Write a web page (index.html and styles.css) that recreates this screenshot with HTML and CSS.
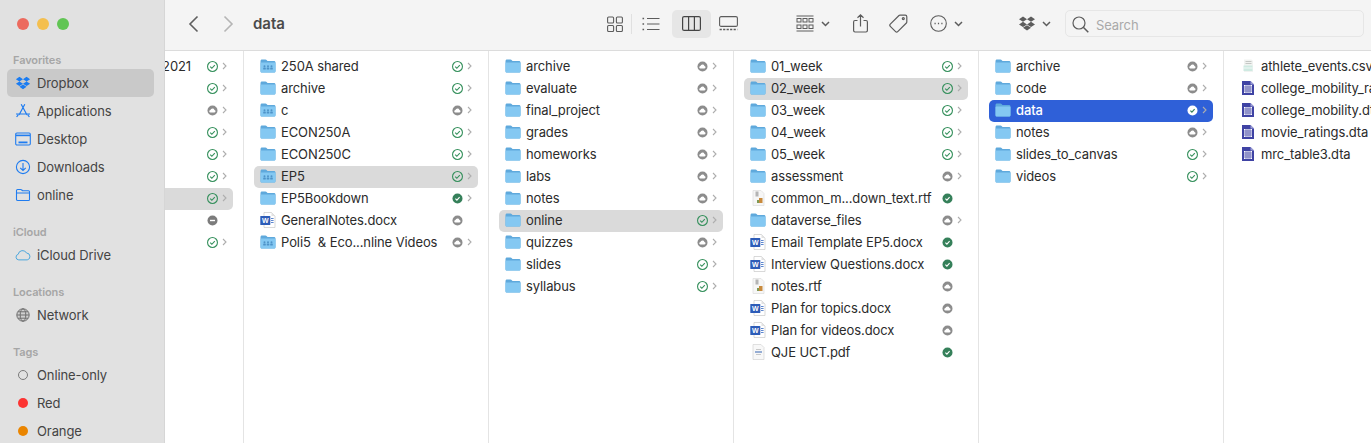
FILE: index.html
```html
<!DOCTYPE html>
<html>
<head>
  <title>data</title>
  <link rel="stylesheet" href="styles.css">
</head>
<body>
  <svg class="defs" width="0" height="0">
    <symbol id="folder" viewBox="0 0 16 14">
      <path d="M.5 2.2C.5 1.2 1.1.6 2 .6h3.4c.7 0 1 .2 1.4.6l.7.7h6.4c1 0 1.600.6 1.600 1.600V12c0 1-.6 1.500-1.600 1.500H2c-1 0-1.500-.5-1.500-1.500z" fill="#5fa9dc"/>
      <path d="M.5 4.400c0-.7.4-1 1-1h13c.6 0 1 .3 1 1V12c0 1-.6 1.500-1.600 1.500H2c-1 0-1.500-.5-1.500-1.500z" fill="#84c8f2"/>
    </symbol>
    <symbol id="shared" viewBox="0 0 16 14">
      <use href="#folder"/>
      <g fill="#4f93c8">
        <circle cx="4.500" cy="7.200" r="1"/><circle cx="8" cy="7.200" r="1"/><circle cx="11.500" cy="7.200" r="1"/>
        <rect x="3.200" y="8.600" width="2.600" height="2" rx=".6"/><rect x="6.700" y="8.600" width="2.600" height="2" rx=".6"/><rect x="10.200" y="8.600" width="2.600" height="2" rx=".6"/>
      </g>
    </symbol>
    <symbol id="word" viewBox="0 0 16 16">
      <path d="M4 .5h7.500L15 4v11.500H4z" fill="#fff" stroke="#c9c9c9" stroke-width=".7"/>
      <path d="M11.500.5V4H15z" fill="#e2e2e2"/>
      <path d="M11 6.500h2.600M11 8.500h2.600M11 10.500h2.600" stroke="#4a78c8" stroke-width=".9"/>
      <rect x=".3" y="4" width="10" height="9" rx=".6" fill="#2d5cb8"/>
    </symbol>
    <symbol id="rtf" viewBox="0 0 16 16">
      <path d="M3 .5h8L14 3.500v12H3z" fill="#f6f6f6" stroke="#dcdcdc" stroke-width=".7"/>
      <rect x="5.500" y="1.500" width="3" height="5" fill="#b4b4b4"/>
      <path d="M9 8h3.500v5H9z" fill="#c98a3c"/>
      <path d="M7 10h2v3H7z" fill="#7f9a55"/>
    </symbol>
    <symbol id="pdf" viewBox="0 0 16 16">
      <path d="M3 .5h8L14 3.500v12H3z" fill="#f8f8f8" stroke="#d4d4d4" stroke-width=".7"/>
      <path d="M5 8h7" stroke="#6d8fc4" stroke-width="1.400"/>
      <path d="M6 5.500h5M6 10.500h5" stroke="#bbb" stroke-width=".8"/>
    </symbol>
    <symbol id="csv" viewBox="0 0 16 16">
      <path d="M4 1.500h7.500l1.500 1.500v11H4z" fill="#f1f3f1"/>
      <path d="M5.500 3.500h6M5.500 5.500h6" stroke="#c4c7c4"/>
      <path d="M3.500 7.500h9v5.500h-9z" fill="#cfeae2"/>
      <path d="M3.500 10h9" stroke="#fff" stroke-width=".7"/>
    </symbol>
    <symbol id="dta" viewBox="0 0 16 16">
      <path d="M2 1h8.500L14 4.500V15H2z" fill="#3f43a4"/>
      <path d="M10.500 1V4.500H14z" fill="#9a9cd6"/>
      <rect x="4" y="5" width="8" height="8" fill="#fff"/>
      <path d="M6 5v8M8 5v8M10 5v8M4 7h8M4 9h8M4 11h8" stroke="#3f43a4" stroke-width=".7"/>
    </symbol>
    <symbol id="ok" viewBox="0 0 10 10">
      <circle cx="5" cy="5" r="4.500" fill="none" stroke="#35905c" stroke-width="1"/>
      <path d="M2.900 5.100l1.500 1.500L7.100 3.700" fill="none" stroke="#35905c" stroke-width="1"/>
    </symbol>
    <symbol id="done" viewBox="-.5 -.5 11 11">
      <circle cx="5" cy="5" r="5" fill="#35805a"/>
      <path d="M2.900 5.100l1.500 1.500L7.100 3.700" fill="none" stroke="#fff" stroke-width="1.100"/>
    </symbol>
    <symbol id="okwhite" viewBox="-.5 -.5 11 11">
      <circle cx="5" cy="5" r="5" fill="#fff"/>
      <path d="M2.900 5.100l1.500 1.500L7.100 3.700" fill="none" stroke="#35805a" stroke-width="1.200"/>
    </symbol>
    <symbol id="cloud" viewBox="-.5 -.5 11 11">
      <circle cx="5" cy="5" r="5" fill="#8c8c8c"/>
      <path d="M3.100 7.100a1.250 1.250 0 0 1-.2-2.500A2.150 2.150 0 0 1 7 4.500 1.320 1.320 0 0 1 6.900 7.100z" fill="#fff"/>
    </symbol>
    <symbol id="minus" viewBox="-.5 -.5 11 11">
      <circle cx="5" cy="5" r="5" fill="#7c7c7c"/>
      <path d="M2.500 5h5" stroke="#fff" stroke-width="1.400"/>
    </symbol>
    <symbol id="chev" viewBox="0 0 5 8">
      <path d="M1 1l3 3-3 3" fill="none" stroke="#aeaeae" stroke-width="1.100"/>
    </symbol>
    <symbol id="drop" viewBox="0 0 16 15">
      <path d="M4 .6L8 3.200 4 5.800 0 3.200zM12 .6L16 3.200 12 5.800 8 3.200zM4 5.800L8 8.400 4 11 0 8.400zM12 5.800L16 8.400 12 11 8 8.400zM8 9.200L12 11.800 8 14.400 4 11.800z"/>
    </symbol>
    <symbol id="down" viewBox="0 0 9 6">
      <path d="M1 1l3.500 3.500L8 1" fill="none" stroke="#5c5c5c" stroke-width="1.500"/>
    </symbol>
  </svg>

  <div class="window">
    <aside class="sidebar">
      <div class="lights">
        <span class="light red"></span>
        <span class="light yellow"></span>
        <span class="light green"></span>
      </div>

      <div class="side-title first">Favorites</div>
      <div class="side-item active">
        <svg class="side-icon blue-fill" viewBox="-1 -1 18 17"><use href="#drop" width="16" height="15"/></svg>Dropbox
      </div>
      <div class="side-item">
        <svg class="side-icon" viewBox="0 0 16 16" fill="none" stroke="#1f7cf0" stroke-width="1.200"><path d="M9.800 1.200L4 12M6.200 1.200L12 12M1 11h14M1.600 14l1.600-2.200M14.400 14l-1.600-2.200"/></svg>Applications
      </div>
      <div class="side-item">
        <svg class="side-icon" viewBox="0 0 16 16" fill="none" stroke="#1f7cf0" stroke-width="1.100"><rect x=".7" y="2" width="14.600" height="12" rx="1.200"/><path d="M1 4.400h14" stroke-width="1.600"/><path d="M3.500 11.400h9" stroke-width="1.800"/></svg>Desktop
      </div>
      <div class="side-item">
        <svg class="side-icon" viewBox="0 0 16 16" fill="none" stroke="#1f7cf0" stroke-width="1.100"><circle cx="8" cy="8" r="6.600"/><path d="M8 4v7.400M5.200 8.800L8 11.500l2.800-2.700"/></svg>Downloads
      </div>
      <div class="side-item">
        <svg class="side-icon" viewBox="0 0 16 16" fill="none" stroke="#1f7cf0" stroke-width="1.100"><path d="M1.500 3.600c0-.7.4-1.100 1.100-1.100h3c.6 0 .9.2 1.200.5l.7.7h6c.7 0 1 .4 1 1.100v7.600c0 .7-.3 1.100-1 1.100H2.600c-.7 0-1.100-.4-1.100-1.100zM1.500 6h13"/></svg>online
      </div>

      <div class="side-title">iCloud</div>
      <div class="side-item">
        <svg class="side-icon" viewBox="0 0 18 14" fill="none" stroke="#3a9fdc" stroke-width="1"><path d="M4.200 12.500a3.200 3.200 0 0 1-.6-6.300A5 5 0 0 1 13 4.800a3.900 3.900 0 0 1 .8 7.700z"/></svg>iCloud Drive
      </div>

      <div class="side-title">Locations</div>
      <div class="side-item">
        <svg class="side-icon" viewBox="0 0 16 16" fill="none" stroke="#6f6f6f" stroke-width="1"><circle cx="8" cy="8" r="6.200" fill="#d0d0d0"/><ellipse cx="8" cy="8" rx="2.800" ry="6.200"/><path d="M2 8h12M3 4.800h10M3 11.200h10"/></svg>Network
      </div>

      <div class="side-title">Tags</div>
      <div class="side-item">
        <span class="tag-slot"><span class="tag-dot hollow"></span></span>Online-only
      </div>
      <div class="side-item">
        <span class="tag-slot"><span class="tag-dot tag-red"></span></span>Red
      </div>
      <div class="side-item">
        <span class="tag-slot"><span class="tag-dot tag-orange"></span></span>Orange
      </div>
    </aside>

    <main class="main">
      <header class="toolbar">
        <button class="nav-btn"><svg width="11" height="18" viewBox="0 0 11 18" fill="none" stroke="#5f5f5f" stroke-width="1.600"><path d="M9.500 1.500L2 9l7.500 7.500"/></svg></button>
        <button class="nav-btn next"><svg width="11" height="18" viewBox="0 0 11 18" fill="none" stroke="#b5b5b5" stroke-width="1.600"><path d="M1.500 1.500L9 9l-7.500 7.500"/></svg></button>
        <h1 class="path-title">data</h1>

        <div class="view-group">
          <svg class="tb-icon" width="16" height="16" viewBox="0 0 16 16" fill="none" stroke="#5c5c5c" stroke-width="1.100"><rect x=".6" y="1" width="6" height="6" rx="1"/><rect x="9.400" y="1" width="6" height="6" rx="1"/><rect x=".6" y="9.500" width="6" height="6" rx="1"/><rect x="9.400" y="9.500" width="6" height="6" rx="1"/></svg>
          <span class="tb-divider"></span>
          <svg class="tb-icon list" width="18" height="14" viewBox="0 0 18 14" fill="none" stroke="#5c5c5c" stroke-width="1.200"><path d="M5 1.500h12.500M5 7h12.500M5 12.500h12.500"/><path d="M.5 1.500h1.600M.5 7h1.600M.5 12.500h1.600" stroke-width="1.600"/></svg>
          <span class="view-on"><svg width="19" height="15" viewBox="0 0 19 15" fill="none" stroke="#444" stroke-width="1.200"><rect x=".6" y=".6" width="17.800" height="13.800" rx="1.500"/><path d="M6.600.6v13.800M12.400.6v13.800"/></svg></span>
          <svg class="tb-icon" width="19" height="15" viewBox="0 0 19 15" fill="none" stroke="#5c5c5c" stroke-width="1.100"><rect x=".6" y=".6" width="17.800" height="9.800" rx="1.500"/><path d="M.6 13.500h17.800" stroke-width="1.600" stroke-dasharray="2.200 1.300"/></svg>
        </div>

        <div class="action group-action">
          <svg width="18" height="17" viewBox="0 0 18 17" fill="none" stroke="#5c5c5c" stroke-width="1"><path d="M.5 1h17M.5 16h17"/><rect x="1" y="3.500" width="4" height="3.500"/><rect x="7" y="3.500" width="4" height="3.500"/><rect x="13" y="3.500" width="4" height="3.500"/><rect x="1" y="10" width="4" height="3.500"/><rect x="7" y="10" width="4" height="3.500"/><rect x="13" y="10" width="4" height="3.500"/></svg>
          <svg class="caret" width="9" height="6"><use href="#down"/></svg>
        </div>
        <svg class="share" width="15" height="19" viewBox="0 0 15 19" fill="none" stroke="#5c5c5c" stroke-width="1.200"><path d="M4.500 6.500H2c-.9 0-1.400.5-1.400 1.400v8.700c0 .9.5 1.400 1.400 1.400h11c.9 0 1.400-.5 1.400-1.400V7.900c0-.9-.5-1.400-1.400-1.400h-2.500M7.500 12.500V1M4.500 3.800L7.500.9l3 2.900"/></svg>
        <svg class="tag-icon" width="19" height="19" viewBox="0 0 19 19" fill="none" stroke="#5c5c5c" stroke-width="1.200"><path d="M1.300 10.200L10 1.500c.3-.3.600-.4 1-.4h5.200c.9 0 1.600.7 1.600 1.600V8c0 .4-.1.700-.4 1l-8.700 8.700c-.6.600-1.500.6-2.100 0l-5.300-5.400c-.6-.6-.6-1.500 0-2.100z"/><circle cx="14.300" cy="4.600" r="1"/></svg>
        <div class="action more">
          <svg width="17" height="17" viewBox="0 0 17 17" fill="none" stroke="#5c5c5c" stroke-width="1.100"><circle cx="8.500" cy="8.500" r="7.800"/><path d="M4.500 8.500h1.200M7.900 8.500h1.200M11.300 8.500h1.200" stroke-width="1.500"/></svg>
          <svg class="caret" width="9" height="6"><use href="#down"/></svg>
        </div>
        <div class="action dropbox-action">
          <svg class="drop-gray" width="16" height="15"><use href="#drop"/></svg>
          <svg class="caret" width="9" height="6"><use href="#down"/></svg>
        </div>
        <div class="search">
          <svg width="17" height="17" viewBox="0 0 17 17" fill="none" stroke="#5c5c5c" stroke-width="1.200"><circle cx="7" cy="7" r="6"/><path d="M11.300 11.300l5 5" stroke-width="1.500"/></svg>
          <span>Search</span>
        </div>
      </header>

      <div class="columns">
        <section class="column clipped">
          <div class="column-inner">
            <div class="row"><span class="icon"></span><span class="name">2021</span><svg class="status"><use href="#ok"/></svg><svg class="chev"><use href="#chev"/></svg></div>
            <div class="row"><span class="icon"></span><span class="name"></span><svg class="status"><use href="#ok"/></svg><svg class="chev"><use href="#chev"/></svg></div>
            <div class="row"><span class="icon"></span><span class="name"></span><svg class="status"><use href="#cloud"/></svg><svg class="chev"><use href="#chev"/></svg></div>
            <div class="row"><span class="icon"></span><span class="name"></span><svg class="status"><use href="#ok"/></svg><svg class="chev"><use href="#chev"/></svg></div>
            <div class="row"><span class="icon"></span><span class="name"></span><svg class="status"><use href="#ok"/></svg><svg class="chev"><use href="#chev"/></svg></div>
            <div class="row"><span class="icon"></span><span class="name"></span><svg class="status"><use href="#ok"/></svg><svg class="chev"><use href="#chev"/></svg></div>
            <div class="row current"><span class="icon"></span><span class="name"></span><svg class="status"><use href="#ok"/></svg><svg class="chev"><use href="#chev"/></svg></div>
            <div class="row"><span class="icon"></span><span class="name"></span><svg class="status"><use href="#minus"/></svg><span class="chev"></span></div>
            <div class="row"><span class="icon"></span><span class="name"></span><svg class="status"><use href="#ok"/></svg><svg class="chev"><use href="#chev"/></svg></div>
          </div>
        </section>

        <section class="column">
          <div class="row"><svg class="icon"><use href="#shared"/></svg><span class="name">250A shared</span><svg class="status"><use href="#ok"/></svg><svg class="chev"><use href="#chev"/></svg></div>
          <div class="row"><svg class="icon"><use href="#folder"/></svg><span class="name">archive</span><svg class="status"><use href="#ok"/></svg><svg class="chev"><use href="#chev"/></svg></div>
          <div class="row"><svg class="icon"><use href="#shared"/></svg><span class="name">c</span><svg class="status"><use href="#cloud"/></svg><svg class="chev"><use href="#chev"/></svg></div>
          <div class="row"><svg class="icon"><use href="#folder"/></svg><span class="name">ECON250A</span><svg class="status"><use href="#ok"/></svg><svg class="chev"><use href="#chev"/></svg></div>
          <div class="row"><svg class="icon"><use href="#folder"/></svg><span class="name">ECON250C</span><svg class="status"><use href="#ok"/></svg><svg class="chev"><use href="#chev"/></svg></div>
          <div class="row current"><svg class="icon"><use href="#shared"/></svg><span class="name">EP5</span><svg class="status"><use href="#ok"/></svg><svg class="chev"><use href="#chev"/></svg></div>
          <div class="row"><svg class="icon"><use href="#folder"/></svg><span class="name">EP5Bookdown</span><svg class="status"><use href="#done"/></svg><svg class="chev"><use href="#chev"/></svg></div>
          <div class="row"><svg class="icon" viewBox="0 0 16 16"><use href="#word"/><text class="word-w" x="5.300" y="11">W</text></svg><span class="name">GeneralNotes.docx</span><svg class="status"><use href="#cloud"/></svg><span class="chev"></span></div>
          <div class="row"><svg class="icon"><use href="#shared"/></svg><span class="name">Poli5&nbsp; &amp; Eco...nline Videos</span><svg class="status"><use href="#cloud"/></svg><svg class="chev"><use href="#chev"/></svg></div>
        </section>

        <section class="column">
          <div class="row"><svg class="icon"><use href="#folder"/></svg><span class="name">archive</span><svg class="status"><use href="#cloud"/></svg><svg class="chev"><use href="#chev"/></svg></div>
          <div class="row"><svg class="icon"><use href="#folder"/></svg><span class="name">evaluate</span><svg class="status"><use href="#cloud"/></svg><svg class="chev"><use href="#chev"/></svg></div>
          <div class="row"><svg class="icon"><use href="#folder"/></svg><span class="name">final_project</span><svg class="status"><use href="#cloud"/></svg><svg class="chev"><use href="#chev"/></svg></div>
          <div class="row"><svg class="icon"><use href="#folder"/></svg><span class="name">grades</span><svg class="status"><use href="#cloud"/></svg><svg class="chev"><use href="#chev"/></svg></div>
          <div class="row"><svg class="icon"><use href="#folder"/></svg><span class="name">homeworks</span><svg class="status"><use href="#cloud"/></svg><svg class="chev"><use href="#chev"/></svg></div>
          <div class="row"><svg class="icon"><use href="#folder"/></svg><span class="name">labs</span><svg class="status"><use href="#cloud"/></svg><svg class="chev"><use href="#chev"/></svg></div>
          <div class="row"><svg class="icon"><use href="#folder"/></svg><span class="name">notes</span><svg class="status"><use href="#cloud"/></svg><svg class="chev"><use href="#chev"/></svg></div>
          <div class="row current"><svg class="icon"><use href="#folder"/></svg><span class="name">online</span><svg class="status"><use href="#ok"/></svg><svg class="chev"><use href="#chev"/></svg></div>
          <div class="row"><svg class="icon"><use href="#folder"/></svg><span class="name">quizzes</span><svg class="status"><use href="#cloud"/></svg><svg class="chev"><use href="#chev"/></svg></div>
          <div class="row"><svg class="icon"><use href="#folder"/></svg><span class="name">slides</span><svg class="status"><use href="#ok"/></svg><svg class="chev"><use href="#chev"/></svg></div>
          <div class="row"><svg class="icon"><use href="#folder"/></svg><span class="name">syllabus</span><svg class="status"><use href="#ok"/></svg><svg class="chev"><use href="#chev"/></svg></div>
        </section>

        <section class="column">
          <div class="row"><svg class="icon"><use href="#folder"/></svg><span class="name">01_week</span><svg class="status"><use href="#ok"/></svg><svg class="chev"><use href="#chev"/></svg></div>
          <div class="row current"><svg class="icon"><use href="#folder"/></svg><span class="name">02_week</span><svg class="status"><use href="#ok"/></svg><svg class="chev"><use href="#chev"/></svg></div>
          <div class="row"><svg class="icon"><use href="#folder"/></svg><span class="name">03_week</span><svg class="status"><use href="#ok"/></svg><svg class="chev"><use href="#chev"/></svg></div>
          <div class="row"><svg class="icon"><use href="#folder"/></svg><span class="name">04_week</span><svg class="status"><use href="#ok"/></svg><svg class="chev"><use href="#chev"/></svg></div>
          <div class="row"><svg class="icon"><use href="#folder"/></svg><span class="name">05_week</span><svg class="status"><use href="#ok"/></svg><svg class="chev"><use href="#chev"/></svg></div>
          <div class="row"><svg class="icon"><use href="#folder"/></svg><span class="name">assessment</span><svg class="status"><use href="#cloud"/></svg><svg class="chev"><use href="#chev"/></svg></div>
          <div class="row"><svg class="icon"><use href="#rtf"/></svg><span class="name">common_m...down_text.rtf</span><svg class="status"><use href="#done"/></svg><span class="chev"></span></div>
          <div class="row"><svg class="icon"><use href="#folder"/></svg><span class="name">dataverse_files</span><svg class="status"><use href="#cloud"/></svg><svg class="chev"><use href="#chev"/></svg></div>
          <div class="row"><svg class="icon" viewBox="0 0 16 16"><use href="#word"/><text class="word-w" x="5.300" y="11">W</text></svg><span class="name">Email Template EP5.docx</span><svg class="status"><use href="#done"/></svg><span class="chev"></span></div>
          <div class="row"><svg class="icon" viewBox="0 0 16 16"><use href="#word"/><text class="word-w" x="5.300" y="11">W</text></svg><span class="name">Interview Questions.docx</span><svg class="status"><use href="#done"/></svg><span class="chev"></span></div>
          <div class="row"><svg class="icon"><use href="#rtf"/></svg><span class="name">notes.rtf</span><svg class="status"><use href="#cloud"/></svg><span class="chev"></span></div>
          <div class="row"><svg class="icon" viewBox="0 0 16 16"><use href="#word"/><text class="word-w" x="5.300" y="11">W</text></svg><span class="name">Plan for topics.docx</span><svg class="status"><use href="#cloud"/></svg><span class="chev"></span></div>
          <div class="row"><svg class="icon" viewBox="0 0 16 16"><use href="#word"/><text class="word-w" x="5.300" y="11">W</text></svg><span class="name">Plan for videos.docx</span><svg class="status"><use href="#cloud"/></svg><span class="chev"></span></div>
          <div class="row"><svg class="icon"><use href="#pdf"/></svg><span class="name">QJE UCT.pdf</span><svg class="status"><use href="#done"/></svg><span class="chev"></span></div>
        </section>

        <section class="column">
          <div class="row"><svg class="icon"><use href="#folder"/></svg><span class="name">archive</span><svg class="status"><use href="#cloud"/></svg><svg class="chev"><use href="#chev"/></svg></div>
          <div class="row"><svg class="icon"><use href="#folder"/></svg><span class="name">code</span><svg class="status"><use href="#cloud"/></svg><svg class="chev"><use href="#chev"/></svg></div>
          <div class="row selected"><svg class="icon"><use href="#folder"/></svg><span class="name">data</span><svg class="status"><use href="#okwhite"/></svg><svg class="chev"><use href="#chev"/></svg></div>
          <div class="row"><svg class="icon"><use href="#folder"/></svg><span class="name">notes</span><svg class="status"><use href="#cloud"/></svg><svg class="chev"><use href="#chev"/></svg></div>
          <div class="row"><svg class="icon"><use href="#folder"/></svg><span class="name">slides_to_canvas</span><svg class="status"><use href="#ok"/></svg><svg class="chev"><use href="#chev"/></svg></div>
          <div class="row"><svg class="icon"><use href="#folder"/></svg><span class="name">videos</span><svg class="status"><use href="#ok"/></svg><svg class="chev"><use href="#chev"/></svg></div>
        </section>

        <section class="column last">
          <div class="row"><svg class="icon"><use href="#csv"/></svg><span class="name">athlete_events.csv</span></div>
          <div class="row"><svg class="icon"><use href="#dta"/></svg><span class="name">college_mobility_rates.dta</span></div>
          <div class="row"><svg class="icon"><use href="#dta"/></svg><span class="name">college_mobility.dta</span></div>
          <div class="row"><svg class="icon"><use href="#dta"/></svg><span class="name">movie_ratings.dta</span></div>
          <div class="row"><svg class="icon"><use href="#dta"/></svg><span class="name">mrc_table3.dta</span></div>
        </section>
      </div>
    </main>
  </div>
</body>
</html>
```

FILE: styles.css
```css
* { box-sizing: border-box; }
html, body { margin: 0; height: 100%; overflow: hidden; }
body { font-family: "Inter", "Liberation Sans", sans-serif; font-size: 13px; letter-spacing: -0.1px; color: #2b2b2b; background: #fff; }
.defs { display: block; height: 0; }
svg { display: block; flex: none; }

.window { display: flex; height: 443px; overflow: hidden; }

/* sidebar */
.sidebar { width: 165px; flex: none; background: #e1e1e1; border-right: 1px solid #d6d6d6; padding: 0 10px 0 7px; color: #444; }
.lights { display: flex; gap: 8px; padding: 18px 0 0 10px; height: 52px; }
.light { width: 12px; height: 12px; border-radius: 50%; }
.light.red { background: #ec6a5e; }
.light.yellow { background: #f4bf4f; }
.light.green { background: #61c554; }

.side-title { height: 16px; line-height: 16px; margin: 15px 0 1px 6px; font-size: 11px; font-weight: 600; color: #a6a6a6; }
.side-title.first { margin-top: 0; }
.side-item { display: flex; align-items: center; height: 28px; padding-left: 8px; border-radius: 5px; white-space: nowrap; }
.side-item.active { background: #c9c9c9; }
.side-icon { width: 16px; height: 16px; margin-right: 6px; }
.blue-fill { fill: #1a7cf2; }

.tag-slot { display: flex; justify-content: center; width: 16px; margin-right: 6px; }
.tag-dot { width: 10px; height: 10px; border-radius: 50%; }
.tag-dot.hollow { border: 1px solid #7a7a7a; }
.tag-dot.tag-red { background: #fc3432; }
.tag-dot.tag-orange { background: #ea8500; }

/* toolbar */
.main { flex: 1; min-width: 0; display: flex; flex-direction: column; }
.toolbar { display: flex; align-items: center; height: 51px; flex: none; background: #f4f4f4; border-bottom: 1px solid #dcdcdc; padding-bottom: 3px; }
.nav-btn { border: 0; padding: 0; background: none; margin-left: 23px; }
.nav-btn.next { margin-left: 24px; }
.path-title { margin: 0 0 0 19px; font-size: 15px; font-weight: 600; letter-spacing: 0; color: #4a4a4a; width: 60px; }

.view-group { display: flex; align-items: center; margin-left: 294px; }
.tb-divider { width: 1px; height: 20px; background: #e0e0e0; margin: 0 10px 0 8px; }
.view-on { display: flex; align-items: center; justify-content: center; width: 39px; height: 28px; border-radius: 5px; background: #e6e6e6; margin: 0 8px 0 12px; }
.action { display: flex; align-items: center; }
.caret { width: 9px; height: 6px; margin-left: 7px; }
.group-action { margin-left: 58px; }
.share { margin-left: 23px; }
.tag-icon { margin-left: 21px; }
.more { margin-left: 22px; }
.dropbox-action { margin-left: 56px; }
.drop-gray { fill: #5c5c5c; }
.search { display: flex; align-items: center; gap: 7px; width: 299px; height: 27px; margin-left: 14px; padding: 2px 0 0 6px; border: 1px solid #e6e6e6; border-radius: 5px; color: #a9a9a9; }

/* columns */
.columns { display: flex; flex: 1; min-height: 0; overflow: hidden; }
.column { width: 245px; flex: none; padding: 5px 0 0; border-right: 1px solid #e4e4e4; }
.column.clipped { width: 79px; overflow: hidden; }
.column-inner { width: 244px; margin-left: -166px; }
.column.last { flex: 1; min-width: 0; border-right: 0; overflow: hidden; }

.row { display: flex; align-items: center; height: 22px; margin: 0 10px; padding: 0 6px 2px 6px; border-radius: 5px; white-space: nowrap; }
.row.current { background: #dadada; }
.row.selected { background: #2f60d8; color: #fff; font-weight: 500; }
.icon { width: 16px; height: 16px; margin-right: 5px; flex: none; }
.word-w { font-family: "Liberation Sans", sans-serif; font-size: 7px; font-weight: 700; letter-spacing: 0; text-anchor: middle; fill: #fff; }
.name { flex: 1; min-width: 0; }
.clipped .name { text-align: right; flex: none; width: 155px; margin-right: auto; }
.status { width: 11px; height: 11px; margin-right: 4px; }
.chev { width: 5px; height: 8px; flex: none; }
```
